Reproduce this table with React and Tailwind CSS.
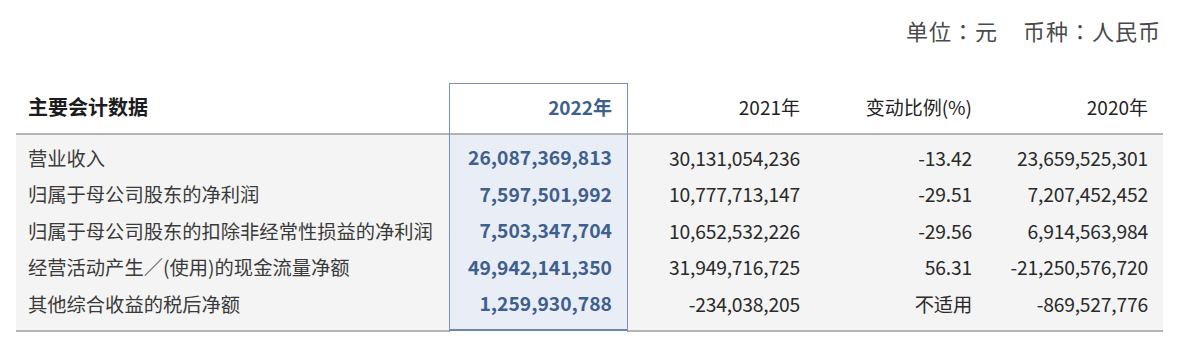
import React from "react";

const rows = [
  { label: "营业收入", y22: "26,087,369,813", y21: "30,131,054,236", chg: "-13.42", y20: "23,659,525,301" },
  { label: "归属于母公司股东的净利润", y22: "7,597,501,992", y21: "10,777,713,147", chg: "-29.51", y20: "7,207,452,452" },
  { label: "归属于母公司股东的扣除非经常性损益的净利润", y22: "7,503,347,704", y21: "10,652,532,226", chg: "-29.56", y20: "6,914,563,984" },
  { label: "经营活动产生／(使用)的现金流量净额", y22: "49,942,141,350", y21: "31,949,716,725", chg: "56.31", y20: "-21,250,576,720" },
  { label: "其他综合收益的税后净额", y22: "1,259,930,788", y21: "-234,038,205", chg: "不适用", y20: "-869,527,776" },
];

const Column = ({ title, field, width, pad, align = "end", labelCol = false }) => {
  return (
    <div className={`flex flex-col ${width}`}>
      <div className={`h-[52px] pb-[2px] flex items-center border-b-2 border-[#b4b4b4] ${pad} ${align === "start" ? "justify-start" : "justify-end"}`}>
        <span className={labelCol ? "text-[20px] font-bold text-[#1c1c1c]" : "text-[19px] text-[#222]"}>{title}</span>
      </div>
      <div className="bg-[#f4f4f4] pt-[5px] pb-[7px] border-b-2 border-[#b4b4b4]">
        {rows.map((r) => (
          <div
            key={r.label}
            className={`h-[36.5px] flex items-center ${pad} ${align === "start" ? "justify-start" : "justify-end"} text-[19.3px] ${labelCol ? "text-[#3a3a3a]" : "text-[#2a2a2a] tracking-[-0.2px]"}`}
          >
            {r[field]}
          </div>
        ))}
      </div>
    </div>
  );
};

export default function App() {
  return (
    <div className="w-[1200px] h-[351px] bg-white" style={{ fontFamily: '"Noto Sans CJK SC", "Noto Sans", sans-serif' }}>
      <div
        className="h-[83px] flex justify-end items-start pt-[15px] pr-[39px] text-[22px] tracking-[1px] text-[#4a4a4a] leading-[30px]"
        style={{ fontFamily: '"Noto Sans CJK JP", "Noto Sans CJK SC", sans-serif' }}
      >
        <span>单位：元</span>
        <span className="ml-[25px]">币种：人民币</span>
      </div>
      <div className="flex px-[16px]">
        <Column title="主要会计数据" field="label" width="w-[433px]" pad="pl-[12px]" align="start" labelCol />
        <div className="flex flex-col w-[179px] border-x-[1.5px] border-t-[1.5px] border-[#7c90b2]">
          <div className="h-[50.5px] pb-[2px] flex items-center justify-end pr-[15px] border-b-2 border-[#b4b4b4] bg-white">
            <span className="text-[19px] font-bold text-[#3f5f8d]">2022年</span>
          </div>
          <div className="bg-[#e9eef6] pt-[5px] pb-[7px] border-b-2 border-[#6f86ab]">
            {rows.map((r) => (
              <div key={r.label} className="h-[36.5px] flex items-center justify-end pr-[15px] text-[19.3px] font-bold text-[#3f5f8d]">
                {r.y22}
              </div>
            ))}
          </div>
        </div>
        <Column title="2021年" field="y21" width="w-[188px]" pad="pr-[16px]" />
        <Column title="变动比例(%)" field="chg" width="w-[172px]" pad="pr-[16px]" />
        <Column title="2020年" field="y20" width="w-[175px]" pad="pr-[15px]" />
      </div>
    </div>
  );
}
